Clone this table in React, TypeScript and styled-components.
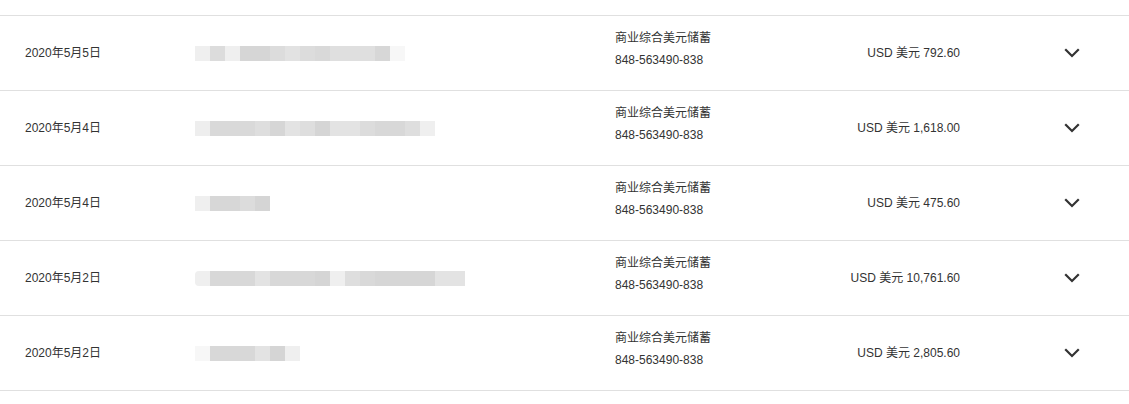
import React from "react";
import styled, { createGlobalStyle } from "styled-components";

const GlobalStyle = createGlobalStyle`
  body {
    margin: 0;
    background: #fff;
    font-family: "Liberation Sans", Arial, "Noto Sans CJK SC", sans-serif;
    color: #333;
  }
`;

const List = styled.div`
  padding-top: 15px;
  width: 1129px;
`;

const Row = styled.div`
  display: grid;
  grid-template-columns: 170px 420px 200px 145px 1fr;
  align-items: center;
  height: 74px;
  padding-left: 25px;
  border-top: 1px solid #e0e0e0;

  &:last-child {
    border-bottom: 1px solid #e0e0e0;
  }
`;

const DateCell = styled.div`
  font-size: 12px;
  line-height: 16px;
`;

const Mosaic = styled.div`
  display: flex;
  height: 15px;
`;

const Pixel = styled.span<{ $shade: string; $round?: boolean }>`
  width: 15px;
  height: 15px;
  background: ${({ $shade }) => $shade};
  border-radius: ${({ $round }) => ($round ? "4px 0 0 4px" : "0")};
`;

const Account = styled.div`
  font-size: 12px;
  line-height: 22px;
  padding-bottom: 8px;
`;

const Amount = styled.div`
  font-size: 12px;
  line-height: 16px;
  text-align: right;
`;

const Toggle = styled.button`
  justify-self: start;
  margin-left: 104px;
  padding: 0;
  border: 0;
  background: none;
  display: flex;
  cursor: pointer;
`;

const Chevron = () => (
  <svg width="16" height="10" viewBox="0 0 16 10">
    <path
      d="M2 2l6 6 6-6"
      fill="none"
      stroke="#333"
      strokeWidth="2.2"
      strokeLinecap="square"
    />
  </svg>
);

type Tx = {
  date: string;
  amount: string;
  blur: string[];
  round?: boolean;
};

const rows: Tx[] = [
  {
    date: "2020年5月5日",
    amount: "USD 美元 792.60",
    blur: ["#efefef", "#dcdcdc", "#efefef", "#d6d6d6", "#d6d6d6", "#dcdcdc", "#e2e2e2", "#dcdcdc", "#d9d9d9", "#dfdfdf", "#dfdfdf", "#dfdfdf", "#d7d7d7", "#f7f7f7"],
  },
  {
    date: "2020年5月4日",
    amount: "USD 美元 1,618.00",
    blur: ["#eeeeee", "#d9d9d9", "#d9d9d9", "#d9d9d9", "#dedede", "#d6d6d6", "#e3e3e3", "#dedede", "#d5d5d5", "#e3e3e3", "#e3e3e3", "#dcdcdc", "#d8d8d8", "#d8d8d8", "#dedede", "#efefef"],
  },
  {
    date: "2020年5月4日",
    amount: "USD 美元 475.60",
    blur: ["#efefef", "#d7d7d7", "#d7d7d7", "#dcdcdc", "#d5d5d5"],
  },
  {
    date: "2020年5月2日",
    amount: "USD 美元 10,761.60",
    round: true,
    blur: ["#efefef", "#d8d8d8", "#d8d8d8", "#d8d8d8", "#e3e3e3", "#d8d8d8", "#d8d8d8", "#d8d8d8", "#d5d5d5", "#efefef", "#dedede", "#d9d9d9", "#d6d6d6", "#d6d6d6", "#d6d6d6", "#d6d6d6", "#e3e3e3", "#e3e3e3"],
  },
  {
    date: "2020年5月2日",
    amount: "USD 美元 2,805.60",
    blur: ["#f7f7f7", "#d8d8d8", "#d8d8d8", "#d8d8d8", "#e3e3e3", "#d5d5d5", "#efefef"],
  },
];

export default function App() {
  return (
    <>
      <GlobalStyle />
      <List>
        {rows.map((r, i) => (
          <Row key={i}>
            <DateCell>{r.date}</DateCell>
            <Mosaic>
              {r.blur.map((c, j) => (
                <Pixel key={j} $shade={c} $round={r.round && j === 0} />
              ))}
            </Mosaic>
            <Account>
              <div>商业综合美元储蓄</div>
              <div>848-563490-838</div>
            </Account>
            <Amount>{r.amount}</Amount>
            <Toggle aria-label="展开">
              <Chevron />
            </Toggle>
          </Row>
        ))}
      </List>
    </>
  );
}
